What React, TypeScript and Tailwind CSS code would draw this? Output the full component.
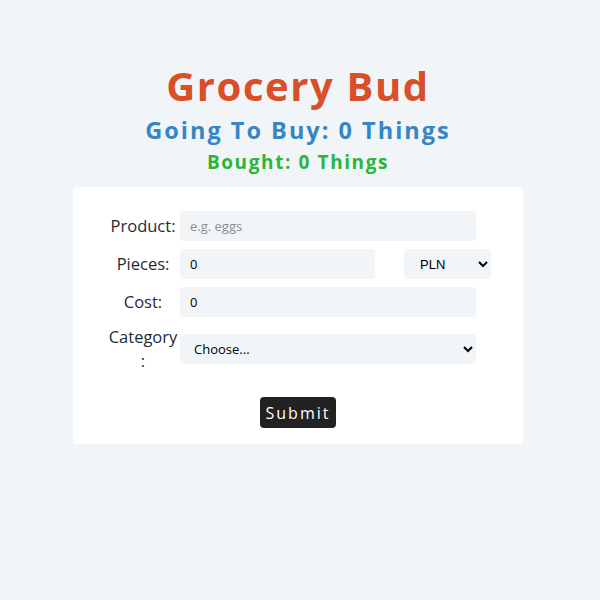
import React, { useState } from 'react';

export default function App() {
  const [product, setProduct] = useState<string>('');
  const [pieces, setPieces] = useState<number | ''>(0);
  const [cost, setCost] = useState<number | ''>(0);
  const [currency, setCurrency] = useState<string>('PLN');
  const [category, setCategory] = useState<string>('');

  const fieldClass =
    "h-[30px] rounded bg-[#f1f5f8] px-[10px] text-[13px] text-black outline-none placeholder:text-[#8a8f95] font-['Open_Sans',sans-serif]";
  const labelClass = 'w-[70px] text-center text-[16.5px] leading-6 text-[#1f2a37]';

  return (
    <div className="min-h-[600px] bg-[#f1f5f8] pt-[62px] font-['Open_Sans',sans-serif]">
      <div className="w-[596px]">
        <h1 className="text-center text-[40px] leading-[48px] font-bold tracking-[1.6px] text-[#d84f28]">
          Grocery Bud
        </h1>
        <h2 className="mt-[5px] text-center text-[23.5px] leading-[30px] font-bold tracking-[2px] text-[#3686c5]">
          Going To Buy: 0 Things
        </h2>
        <h3 className="mt-[5px] text-center text-[19px] leading-[24px] font-bold tracking-[1.6px] text-[#2bb53b]">
          Bought: 0 Things
        </h3>

        <form
          className="mx-auto mt-[13px] w-[450px] rounded bg-white pl-[35px] pt-[24px] pb-[16px]"
          onSubmit={(e) => e.preventDefault()}
        >
          <div className="flex flex-col gap-2">
            <div className="flex items-center gap-[2px]">
              <label htmlFor="product" className={labelClass}>
                Product:
              </label>
              <input
                id="product"
                type="text"
                value={product}
                onChange={(e) => setProduct(e.target.value)}
                placeholder="e.g. eggs"
                className={`${fieldClass} w-[296px]`}
              />
            </div>

            <div className="flex items-center gap-[2px]">
              <label htmlFor="pieces" className={labelClass}>
                Pieces:
              </label>
              <input
                id="pieces"
                type="number"
                value={pieces}
                onChange={(e) => setPieces(e.target.value === '' ? '' : Number(e.target.value))}
                className={`${fieldClass} w-[195px]`}
              />
              <select
                value={currency}
                onChange={(e) => setCurrency(e.target.value)}
                className="ml-[27px] h-[30px] w-[87px] rounded bg-[#f1f5f8] pl-[12px] pr-[2px] text-[13px] text-black outline-none font-['Liberation_Sans',Arial,sans-serif]"
              >
                <option>PLN</option>
                <option>EUR</option>
                <option>USD</option>
              </select>
            </div>

            <div className="flex items-center gap-[2px]">
              <label htmlFor="cost" className={labelClass}>
                Cost:
              </label>
              <input
                id="cost"
                type="number"
                value={cost}
                onChange={(e) => setCost(e.target.value === '' ? '' : Number(e.target.value))}
                className={`${fieldClass} w-[296px]`}
              />
            </div>

            <div className="flex items-center gap-[2px]">
              <label htmlFor="category" className={labelClass}>
                Category :
              </label>
              <select
                id="category"
                value={category}
                onChange={(e) => setCategory(e.target.value)}
                className="h-[30px] w-[296px] rounded bg-[#f1f5f8] pl-[10px] pr-[2px] text-[13px] text-black outline-none font-['Open_Sans',sans-serif]"
              >
                <option value="">Choose...</option>
                <option value="fruit">Fruit</option>
                <option value="dairy">Dairy</option>
              </select>
            </div>
          </div>

          <div className="mt-6 flex justify-center pr-[35px]">
            <button
              type="submit"
              className="h-[31px] rounded bg-[#222222] px-[6px] text-[16px] tracking-[2px] text-white"
            >
              Submit
            </button>
          </div>
        </form>
      </div>
    </div>
  );
}
